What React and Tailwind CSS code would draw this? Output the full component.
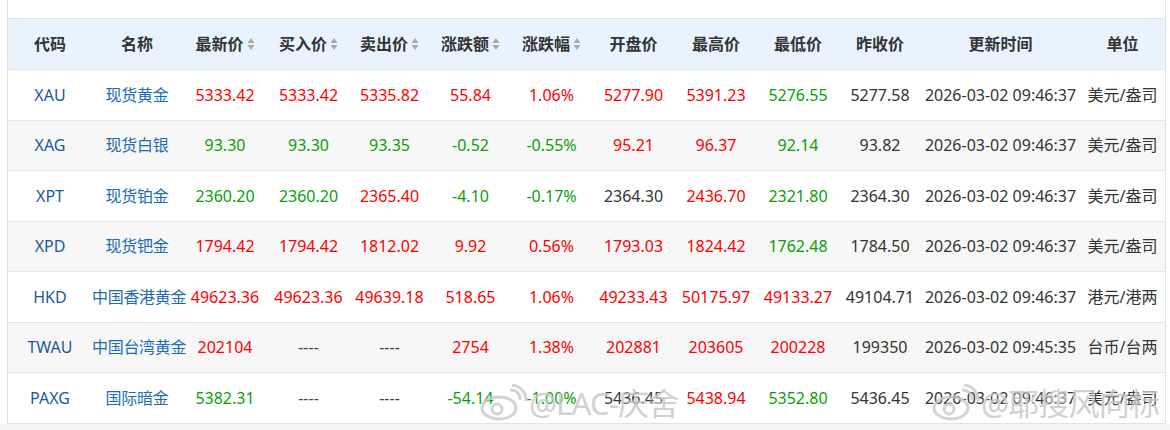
const RED = 'text-[#ff0000]';
const GREEN = 'text-[#0a9f0a]';
const DARK = 'text-[#333333]';

const cols = 'grid grid-cols-[84px_90px_86px_81px_81px_81px_81px_83px_82px_82px_82px_159px_85px]';

const headers = [
    { label: '代码' },
    { label: '名称' },
    { label: '最新价', sort: true },
    { label: '买入价', sort: true },
    { label: '卖出价', sort: true },
    { label: '涨跌额', sort: true },
    { label: '涨跌幅', sort: true },
    { label: '开盘价' },
    { label: '最高价' },
    { label: '最低价' },
    { label: '昨收价' },
    { label: '更新时间' },
    { label: '单位' },
];

const rows = [
    { code: 'XAU', name: '现货黄金', last: '5333.42', buy: '5333.42', sell: '5335.82', chg: '55.84', pct: '1.06%', open: '5277.90', high: '5391.23', low: '5276.55', close: '5277.58', time: '2026-03-02 09:46:37', unit: '美元/盎司' },
    { code: 'XAG', name: '现货白银', last: '93.30', buy: '93.30', sell: '93.35', chg: '-0.52', pct: '-0.55%', open: '95.21', high: '96.37', low: '92.14', close: '93.82', time: '2026-03-02 09:46:37', unit: '美元/盎司' },
    { code: 'XPT', name: '现货铂金', last: '2360.20', buy: '2360.20', sell: '2365.40', chg: '-4.10', pct: '-0.17%', open: '2364.30', high: '2436.70', low: '2321.80', close: '2364.30', time: '2026-03-02 09:46:37', unit: '美元/盎司' },
    { code: 'XPD', name: '现货钯金', last: '1794.42', buy: '1794.42', sell: '1812.02', chg: '9.92', pct: '0.56%', open: '1793.03', high: '1824.42', low: '1762.48', close: '1784.50', time: '2026-03-02 09:46:37', unit: '美元/盎司' },
    { code: 'HKD', name: '中国香港黄金', last: '49623.36', buy: '49623.36', sell: '49639.18', chg: '518.65', pct: '1.06%', open: '49233.43', high: '50175.97', low: '49133.27', close: '49104.71', time: '2026-03-02 09:46:37', unit: '港元/港两' },
    { code: 'TWAU', name: '中国台湾黄金', last: '202104', buy: '----', sell: '----', chg: '2754', pct: '1.38%', open: '202881', high: '203605', low: '200228', close: '199350', time: '2026-03-02 09:45:35', unit: '台币/台两' },
    { code: 'PAXG', name: '国际暗金', last: '5382.31', buy: '----', sell: '----', chg: '-54.14', pct: '-1.00%', open: '5436.45', high: '5438.94', low: '5352.80', close: '5436.45', time: '2026-03-02 09:46:37', unit: '美元/盎司' },
];

function tone(value, close) {
    if (value === '----') return 'text-[#444444]';
    const v = parseFloat(value);
    const c = parseFloat(close);
    if (v > c) return RED;
    if (v < c) return GREEN;
    return DARK;
}

function signTone(value) {
    const v = parseFloat(value);
    if (v > 0) return RED;
    if (v < 0) return GREEN;
    return DARK;
}

function SortIcon() {
    return (
        <svg width="8" height="14" viewBox="0 0 8 14" className="ml-[3px]">
            <path d="M4 1 L7.5 6 L0.5 6 Z" fill="#a8a8a8" />
            <path d="M4 13 L7.5 8 L0.5 8 Z" fill="#a8a8a8" />
        </svg>
    );
}

function WeiboMark() {
    return (
        <svg width="50" height="38" viewBox="0 0 50 38" fill="none" stroke="#c9c9c9" strokeWidth="3">
            <ellipse cx="20" cy="24" rx="17" ry="11" />
            <circle cx="18" cy="25" r="5" />
            <path d="M31 6 a9 9 0 0 1 10 10" />
            <path d="M33 1 a15 15 0 0 1 14 16" />
        </svg>
    );
}

function Watermark({ text, className }) {
    return (
        <div className={`absolute flex items-center pointer-events-none opacity-80 ${className}`}>
            <WeiboMark />
            <span className="text-[31px] text-[#c6c6c6] [text-shadow:0_0_2px_#ffffff] tracking-tight">{text}</span>
        </div>
    );
}

function App() {
    return (
        <div className="bg-white w-[1170px] h-[430px] overflow-hidden font-['Noto_Sans','Noto_Sans_CJK_SC',sans-serif]">
            <div className="relative ml-[7px] w-[1159px] border-x border-[#e2e2e2] pt-[18px] bg-white">
                <div className={`${cols} h-[51px] border-t border-[#e2e2e2] bg-[#e9f3fd] items-center text-[16px] font-bold text-[#333333]`}>
                    {headers.map((h) => (
                        <div key={h.label} className="flex items-center justify-center">
                            <span>{h.label}</span>
                            {h.sort && <SortIcon />}
                        </div>
                    ))}
                </div>
                {rows.map((r, i) => (
                    <div
                        key={r.code}
                        className={`${cols} h-[50.5px] border-t border-[#e6e6e6] items-center text-[16px] text-center whitespace-nowrap ${i % 2 === 1 ? 'bg-[#f7f7f7]' : 'bg-white'}`}
                    >
                        <div className="text-[#1d56a0]">{r.code}</div>
                        <div className="text-[#1b6cb5] tracking-[-0.3px]">{r.name}</div>
                        <div className={tone(r.last, r.close)}>{r.last}</div>
                        <div className={tone(r.buy, r.close)}>{r.buy}</div>
                        <div className={tone(r.sell, r.close)}>{r.sell}</div>
                        <div className={signTone(r.chg)}>{r.chg}</div>
                        <div className={signTone(r.pct)}>{r.pct}</div>
                        <div className={tone(r.open, r.close)}>{r.open}</div>
                        <div className={tone(r.high, r.close)}>{r.high}</div>
                        <div className={tone(r.low, r.close)}>{r.low}</div>
                        <div className={DARK}>{r.close}</div>
                        <div className={DARK}>{r.time}</div>
                        <div className={DARK}>{r.unit}</div>
                    </div>
                ))}
                <div className="border-t border-[#e2e2e2]" />
                <Watermark text="@LAC-庆舍" className="left-[471px] top-[380px]" />
                <Watermark text="@耶搜风向标" className="left-[923px] top-[380px]" />
            </div>
            <div className="h-[10px] bg-[#f4f4f4]" />
        </div>
    );
}

export default App;
